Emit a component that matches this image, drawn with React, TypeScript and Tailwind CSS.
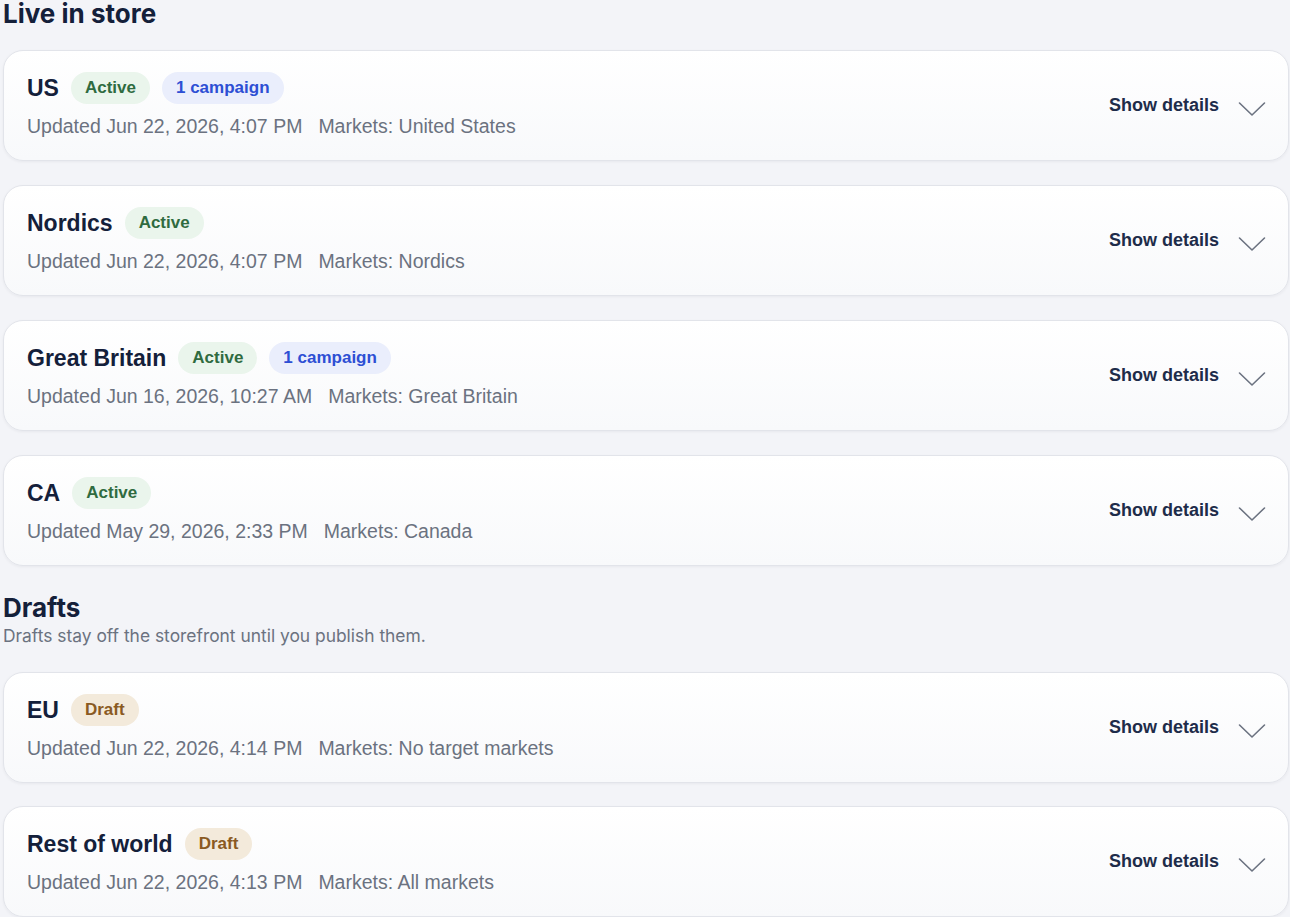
type Badge = { label: string; tone: 'active' | 'campaign' | 'draft' }

type Storefront = {
  name: string
  badges: Badge[]
  updated: string
  markets: string
}

const live: Storefront[] = [
  {
    name: 'US',
    badges: [
      { label: 'Active', tone: 'active' },
      { label: '1 campaign', tone: 'campaign' },
    ],
    updated: 'Jun 22, 2026, 4:07 PM',
    markets: 'United States',
  },
  {
    name: 'Nordics',
    badges: [{ label: 'Active', tone: 'active' }],
    updated: 'Jun 22, 2026, 4:07 PM',
    markets: 'Nordics',
  },
  {
    name: 'Great Britain',
    badges: [
      { label: 'Active', tone: 'active' },
      { label: '1 campaign', tone: 'campaign' },
    ],
    updated: 'Jun 16, 2026, 10:27 AM',
    markets: 'Great Britain',
  },
  {
    name: 'CA',
    badges: [{ label: 'Active', tone: 'active' }],
    updated: 'May 29, 2026, 2:33 PM',
    markets: 'Canada',
  },
]

const drafts: Storefront[] = [
  {
    name: 'EU',
    badges: [{ label: 'Draft', tone: 'draft' }],
    updated: 'Jun 22, 2026, 4:14 PM',
    markets: 'No target markets',
  },
  {
    name: 'Rest of world',
    badges: [{ label: 'Draft', tone: 'draft' }],
    updated: 'Jun 22, 2026, 4:13 PM',
    markets: 'All markets',
  },
]

const toneClass: Record<Badge['tone'], string> = {
  active: 'bg-[#eaf5ec] text-[#2f6b40]',
  campaign: 'bg-[#eaeefc] text-[#2d4fd4]',
  draft: 'bg-[#f3eadb] text-[#8a5a22]',
}

function Chevron() {
  return (
    <svg width="28" height="16" viewBox="0 0 28 16" fill="none" className="mt-[8px]">
      <path d="M1.5 2 L14 14 L26.5 2" stroke="#6b7280" strokeWidth="1.6" strokeLinecap="round" strokeLinejoin="round" />
    </svg>
  )
}

function StoreCard({ store }: { store: Storefront }) {
  return (
    <div className="flex items-center justify-between rounded-[20px] border border-[#e2e4ea] bg-gradient-to-b from-white to-[#f8f9fb] pb-[22px] pl-[23px] pr-[22px] pt-[21px] shadow-[0_1px_3px_rgba(15,23,42,0.05)]">
      <div>
        <div className="flex items-center gap-3">
          <h3 className="text-[23px] font-bold leading-8 text-[#14203a]">{store.name}</h3>
          {store.badges.map((b) => (
            <span
              key={b.label}
              className={`rounded-full px-[14px] text-[17px] font-bold leading-8 ${toneClass[b.tone]}`}
            >
              {b.label}
            </span>
          ))}
        </div>
        <div className="mt-[10px] flex gap-4 text-[19.5px] leading-6 text-[#6b7280]">
          <span>Updated {store.updated}</span>
          <span>Markets: {store.markets}</span>
        </div>
      </div>
      <button className="flex items-center gap-[19px] text-[18px] font-bold text-[#1e2c4a]">
        Show details
        <Chevron />
      </button>
    </div>
  )
}

export default function App() {
  return (
    <div className="min-h-screen bg-[#f3f4f8] pb-10 pl-[3px] pr-[1px] font-['Liberation_Sans',Arial,sans-serif]">
      <h2 className="font-['Inter',sans-serif] text-[26px] font-bold leading-7 text-[#14203a]">Live in store</h2>
      <div className="mt-[22px] space-y-[24px]">
        {live.map((s) => (
          <StoreCard key={s.name} store={s} />
        ))}
      </div>

      <h2 className="mt-[26px] font-['Inter',sans-serif] text-[26px] font-bold leading-8 text-[#14203a]">Drafts</h2>
      <p className="mt-[2px] font-['Inter',sans-serif] text-[17.4px] leading-5 text-[#6b7280]">
        Drafts stay off the storefront until you publish them.
      </p>
      <div className="mt-[26px] space-y-[23px]">
        {drafts.map((s) => (
          <StoreCard key={s.name} store={s} />
        ))}
      </div>
    </div>
  )
}
